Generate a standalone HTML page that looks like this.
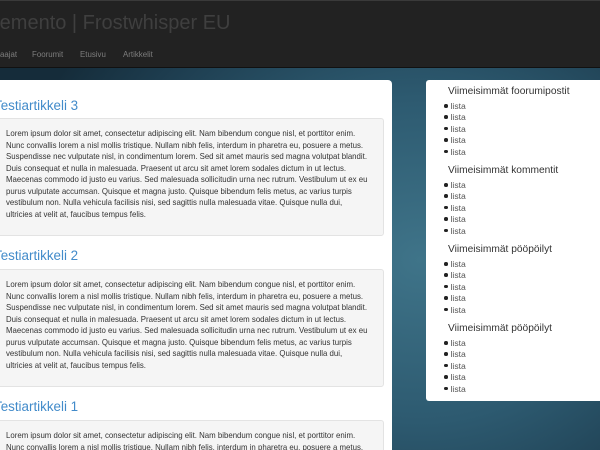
<!DOCTYPE html>
<html style="width:600px;height:450px;overflow:hidden"><head><meta charset="utf-8"><style>
*{margin:0;padding:0;box-sizing:border-box}
body{width:600px;height:450px;overflow:hidden;position:relative;font-family:"Liberation Sans",Arial,sans-serif;
background:radial-gradient(ellipse 420px 360px at 420px 260px,#3f7489 0%,#2d5a70 45%,#1d3c4e 80%,#152c3a 100%);}
.hdr{position:absolute;left:0;top:0;width:600px;height:68px;background:#222;border-top:1px solid #3a3a3a;border-bottom:1px solid #111}
.title{position:absolute;left:-17px;top:11px;font-size:20px;color:#3f3f3f;white-space:nowrap}
.nav{position:absolute;top:49px;font-size:7.9px;color:#7d7d7d;white-space:nowrap}
.main{position:absolute;left:-10px;top:80px;width:402px;height:370px;background:#fff;border-radius:4px 4px 0 0}
.h{position:absolute;left:-6px;font-size:13.4px;color:#428bca;white-space:nowrap}
.well{position:absolute;left:-10px;width:394px;height:118px;background:#f5f5f5;border:1px solid #e3e3e3;border-radius:3px}
.txt{position:absolute;left:6px;font-size:7.85px;line-height:11.5px;color:#333;white-space:nowrap}
.side{position:absolute;left:426px;top:80px;width:174px;height:321px;background:#fff;border-radius:3px 0 0 3px}
.sh{position:absolute;left:22px;font-size:10.2px;color:#333;white-space:nowrap}
.ul{position:absolute;left:23px;font-size:8.6px;line-height:11.4px;color:#555}
.ul div:before{content:"";display:inline-block;width:3.5px;height:3.5px;border-radius:50%;background:#222;margin-right:3px;position:relative;top:-1.5px;margin-left:-5px}
</style></head><body>
<div class="hdr">
<div class="title">Memento | Frostwhisper EU</div>
<div class="nav" style="left:-4px">Jaajat</div>
<div class="nav" style="left:32px">Foorumit</div>
<div class="nav" style="left:80px">Etusivu</div>
<div class="nav" style="left:123px">Artikkelit</div>
</div>
<div class="main"></div>
<div class="h" style="top:98px">Testiartikkeli 3</div>
<div class="well" style="top:118px"></div>
<div class="txt" style="top:128px">Lorem ipsum dolor sit amet, consectetur adipiscing elit. Nam bibendum congue nisl, et porttitor enim.<br>Nunc convallis lorem a nisl mollis tristique. Nullam nibh felis, interdum in pharetra eu, posuere a metus.<br>Suspendisse nec vulputate nisl, in condimentum lorem. Sed sit amet mauris sed magna volutpat blandit.<br>Duis consequat et nulla in malesuada. Praesent ut arcu sit amet lorem sodales dictum in ut lectus.<br>Maecenas commodo id justo eu varius. Sed malesuada sollicitudin urna nec rutrum. Vestibulum ut ex eu<br>purus vulputate accumsan. Quisque et magna justo. Quisque bibendum felis metus, ac varius turpis<br>vestibulum non. Nulla vehicula facilisis nisi, sed sagittis nulla malesuada vitae. Quisque nulla dui,<br>ultricies at velit at, faucibus tempus felis.</div>
<div class="h" style="top:248px">Testiartikkeli 2</div>
<div class="well" style="top:269px"></div>
<div class="txt" style="top:279px">Lorem ipsum dolor sit amet, consectetur adipiscing elit. Nam bibendum congue nisl, et porttitor enim.<br>Nunc convallis lorem a nisl mollis tristique. Nullam nibh felis, interdum in pharetra eu, posuere a metus.<br>Suspendisse nec vulputate nisl, in condimentum lorem. Sed sit amet mauris sed magna volutpat blandit.<br>Duis consequat et nulla in malesuada. Praesent ut arcu sit amet lorem sodales dictum in ut lectus.<br>Maecenas commodo id justo eu varius. Sed malesuada sollicitudin urna nec rutrum. Vestibulum ut ex eu<br>purus vulputate accumsan. Quisque et magna justo. Quisque bibendum felis metus, ac varius turpis<br>vestibulum non. Nulla vehicula facilisis nisi, sed sagittis nulla malesuada vitae. Quisque nulla dui,<br>ultricies at velit at, faucibus tempus felis.</div>
<div class="h" style="top:399px">Testiartikkeli 1</div>
<div class="well" style="top:420px;height:40px"></div>
<div class="txt" style="top:430px">Lorem ipsum dolor sit amet, consectetur adipiscing elit. Nam bibendum congue nisl, et porttitor enim.<br>Nunc convallis lorem a nisl mollis tristique. Nullam nibh felis, interdum in pharetra eu, posuere a metus.</div>
<div class="side">
<div class="sh" style="top:6px">Viimeisimmät foorumipostit</div>
<div class="ul" style="top:21px"><div>lista</div><div>lista</div><div>lista</div><div>lista</div><div>lista</div></div>
<div class="sh" style="top:85px">Viimeisimmät kommentit</div>
<div class="ul" style="top:100px"><div>lista</div><div>lista</div><div>lista</div><div>lista</div><div>lista</div></div>
<div class="sh" style="top:164px">Viimeisimmät pööpöilyt</div>
<div class="ul" style="top:179px"><div>lista</div><div>lista</div><div>lista</div><div>lista</div><div>lista</div></div>
<div class="sh" style="top:243px">Viimeisimmät pööpöilyt</div>
<div class="ul" style="top:258px"><div>lista</div><div>lista</div><div>lista</div><div>lista</div><div>lista</div></div>
</div>
</body></html>
